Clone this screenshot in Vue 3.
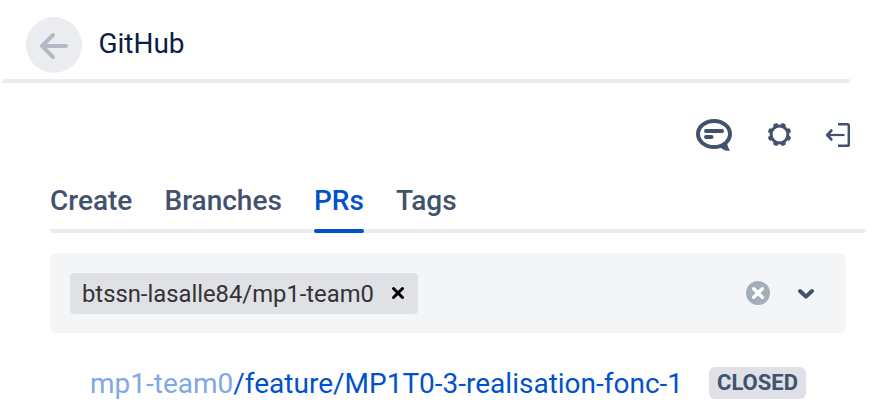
<script setup>
import { ref } from 'vue'

const tabs = ['Create', 'Branches', 'PRs', 'Tags']
const active = ref('PRs')
const teeth = [22.5, 67.5, 112.5, 157.5, 202.5, 247.5, 292.5, 337.5]
</script>

<template>
  <main class="panel">
    <header class="header">
      <button class="back" aria-label="Back">
        <svg width="56" height="56" viewBox="0 0 56 56">
          <path d="M27 18 16 29 27 40M16.500 29H40" fill="none" stroke="#b3bac5" stroke-width="4" stroke-linecap="round" stroke-linejoin="round" />
        </svg>
      </button>
      <h1 class="title">GitHub</h1>
    </header>

    <div class="actions">
      <svg class="chat" width="36" height="34" viewBox="0 0 36 34">
        <ellipse cx="18" cy="16" rx="16" ry="13" fill="none" stroke="#42526e" stroke-width="4" />
        <path d="M24 29 31 23Q31.200 29 34 32.500Q28 33.500 24 29Z" fill="#42526e" />
        <path d="M10 13H26M10 19H15.500" stroke="#42526e" stroke-width="4" stroke-linecap="round" />
      </svg>
      <svg class="gear" width="24" height="24" viewBox="-.5 .5 24 24">
        <circle cx="12" cy="12" r="8.400" fill="none" stroke="#42526e" stroke-width="3" />
        <path v-for="a in teeth" :key="a" d="M9.300 4 9.900 .5Q12 -.3 14.100 .5L14.700 4Z" fill="#42526e" :transform="`rotate(${a} 12 12)`" />
      </svg>
      <svg class="exit" width="26" height="26" viewBox="0 0 26 26">
        <path d="M13 2.200H22.500Q23.800 2.200 23.800 3.500V22.500Q23.800 23.800 22.500 23.800H13" fill="none" stroke="#42526e" stroke-width="2.500" />
        <path d="M2 13H19.500" stroke="#42526e" stroke-width="2.200" />
        <path d="M6.300 8.600 2.300 13 6.300 17.400" fill="none" stroke="#42526e" stroke-width="2.800" stroke-linecap="round" stroke-linejoin="round" />
      </svg>
    </div>

    <nav class="tabs">
      <button v-for="tab in tabs" :key="tab" class="tab" :class="{ active: tab === active }" @click="active = tab">{{ tab }}</button>
    </nav>

    <div class="select">
      <div class="chip">
        <span class="name">btssn-lasalle84/mp1-team0</span>
        <svg width="14" height="14" viewBox="0 0 14 14"><path d="M2.500 2.500 11.500 11.500M11.500 2.500 2.500 11.500" stroke="#000" stroke-width="3" stroke-linecap="round" /></svg>
      </div>
      <div class="controls">
        <svg width="24" height="24" viewBox="0 0 24 24">
          <circle cx="12" cy="12" r="12" fill="#a5adba" />
          <path d="M7.700 7.700 16.300 16.300M16.300 7.700 7.700 16.300" stroke="#fff" stroke-width="3.400" stroke-linecap="round" />
        </svg>
        <svg class="chevron" width="16" height="12" viewBox="0 0 16 12"><path d="M2 3 8 8.600 14 3" fill="none" stroke="#42526e" stroke-width="4" stroke-linecap="round" stroke-linejoin="round" /></svg>
      </div>
    </div>

    <div class="pull">
      <a class="link"><span class="repo">mp1-team0</span>/feature/MP1T0-3-realisation-fonc-1</a>
      <span class="badge">CLOSED</span>
    </div>
  </main>
</template>

<style>
body {
  margin: 0;
  background: #fff;
}
</style>

<style scoped>
.panel {
  box-sizing: border-box;
  width: 880px;
  height: 416px;
  overflow: hidden;
  font-family: Roboto, sans-serif;
  color: #42526e;
}
svg {
  display: block;
  flex: none;
}
button {
  border: 0;
  padding: 0;
  background: none;
  font: inherit;
  color: inherit;
}
.header {
  box-sizing: border-box;
  display: flex;
  width: 848px;
  height: 83px;
  margin-left: 2px;
  padding: 17px 0 0 24px;
  border-bottom: 4px solid #ebecf0;
}
.back {
  width: 56px;
  height: 56px;
  border-radius: 50%;
  background: #ebecf0;
}
.title {
  margin: 11px 0 0 16.400px;
  font-size: 28px;
  line-height: 32px;
  font-weight: 400;
  color: #091e42;
}
.actions {
  display: flex;
  justify-content: flex-end;
  align-items: center;
  height: 34px;
  margin-top: 35px;
  padding-right: 29px;
}
.gear {
  overflow: visible;
  margin-left: 35px;
}
.exit {
  margin-left: 34px;
}
.tabs {
  box-sizing: border-box;
  display: flex;
  gap: 32.150px;
  width: 816px;
  height: 48px;
  margin: 33px 0 0 50px;
  background: linear-gradient(#ebecf0, #ebecf0) bottom / 100% 4px no-repeat;
  border-radius: 2px;
}
.tab {
  position: relative;
  height: 48px;
  padding-bottom: 17px;
  font-size: 28px;
  line-height: 31px;
  font-weight: 500;
}
.active {
  color: #0052cc;
}
.active::after {
  content: '';
  position: absolute;
  inset: auto 0 0;
  height: 4px;
  border-radius: 2px;
  background: #0052cc;
}
.select {
  box-sizing: border-box;
  display: flex;
  align-items: center;
  justify-content: space-between;
  width: 796px;
  height: 80px;
  margin: 20px 0 0 50px;
  padding: 0 32px 0 20px;
  border-radius: 6px;
  background: #f4f5f7;
}
.chip {
  box-sizing: border-box;
  display: flex;
  align-items: center;
  justify-content: space-between;
  width: 348px;
  height: 41px;
  padding: 0 13px 0 12px;
  border-radius: 4px;
  background: #dfe1e6;
  color: #333;
  font-size: 23.800px;
}
.name {
  padding-top: 2px;
}
.controls {
  display: flex;
  align-items: center;
  gap: 28px;
}
.chevron {
  margin-top: 2px;
}
.pull {
  display: flex;
  align-items: center;
  justify-content: space-between;
  width: 716px;
  height: 32px;
  margin: 34px 0 0 90px;
}
.link {
  padding-top: 2px;
  font-size: 28px;
  line-height: 32px;
  white-space: nowrap;
  color: #0052cc;
}
.repo {
  color: #80a8e6;
}
.badge {
  box-sizing: border-box;
  width: 97px;
  height: 32px;
  border-radius: 6px;
  background: #dfe1e6;
  font-size: 22px;
  line-height: 32px;
  font-weight: 700;
  text-align: center;
}
</style>
